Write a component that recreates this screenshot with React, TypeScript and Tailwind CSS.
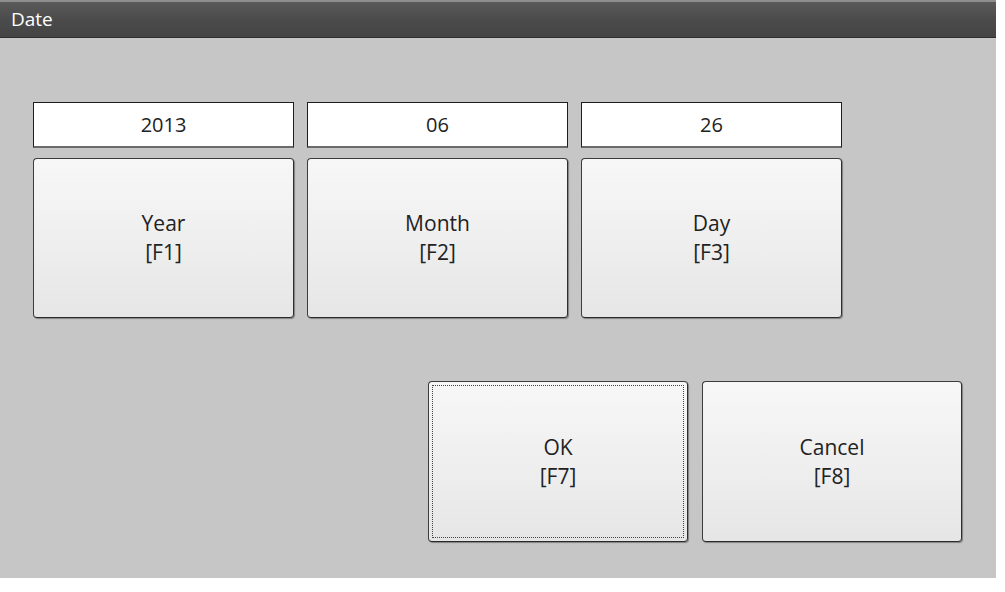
import React from 'react';

const fields = [
  { value: '2013', label: 'Year', key: '[F1]' },
  { value: '06', label: 'Month', key: '[F2]' },
  { value: '26', label: 'Day', key: '[F3]' },
];

const btn =
  'relative flex flex-col items-center justify-center rounded-[4px] border border-[#3c3c3c] border-b-[#2a2a2a] border-r-[#2e2e2e] bg-gradient-to-b from-[#f7f7f7] via-[#efefef] to-[#e6e6e6] text-[21px] leading-[29px] text-[#222] shadow-[1px_1px_1px_rgba(0,0,0,0.35)]';

export default function App() {
  return (
    <div className="w-[1005px] h-[592px] bg-white" style={{ fontFamily: '"Open Sans", "Noto Sans", sans-serif' }}>
      <div className="w-[996px] h-[578px] flex flex-col bg-[#c6c6c6]">
        <div className="h-[38px] shrink-0 flex items-center px-[11px] border-t-2 border-t-[#8e8e8e] border-b border-b-[#2f2f2f] bg-gradient-to-b from-[#5a5a5a] via-[#4b4b4b] to-[#444] text-white text-[19px]">
          Date
        </div>

        <div className="flex flex-col pt-[64px] pl-[33px] pr-[34px]">
          <div className="flex gap-[13px]">
            {fields.map((f) => (
              <div key={f.label} className="w-[261px] flex flex-col gap-[10px]">
                <div className="h-[46px] flex items-center justify-center bg-white border border-[#1e1e1e] border-b-2 border-b-[#6a6a6a] text-[20px] text-[#222]">
                  {f.value}
                </div>
                <button className={`${btn} h-[160px]`}>
                  <span>{f.label}</span>
                  <span>{f.key}</span>
                </button>
              </div>
            ))}
          </div>

          <div className="flex justify-end gap-[14px] mt-[63px]">
            <button className={`${btn} w-[260px] h-[161px]`}>
              <span className="absolute inset-[3px] border border-dotted border-[#444]" />
              <span>OK</span>
              <span>[F7]</span>
            </button>
            <button className={`${btn} w-[260px] h-[161px]`}>
              <span>Cancel</span>
              <span>[F8]</span>
            </button>
          </div>
        </div>
      </div>
    </div>
  );
}
